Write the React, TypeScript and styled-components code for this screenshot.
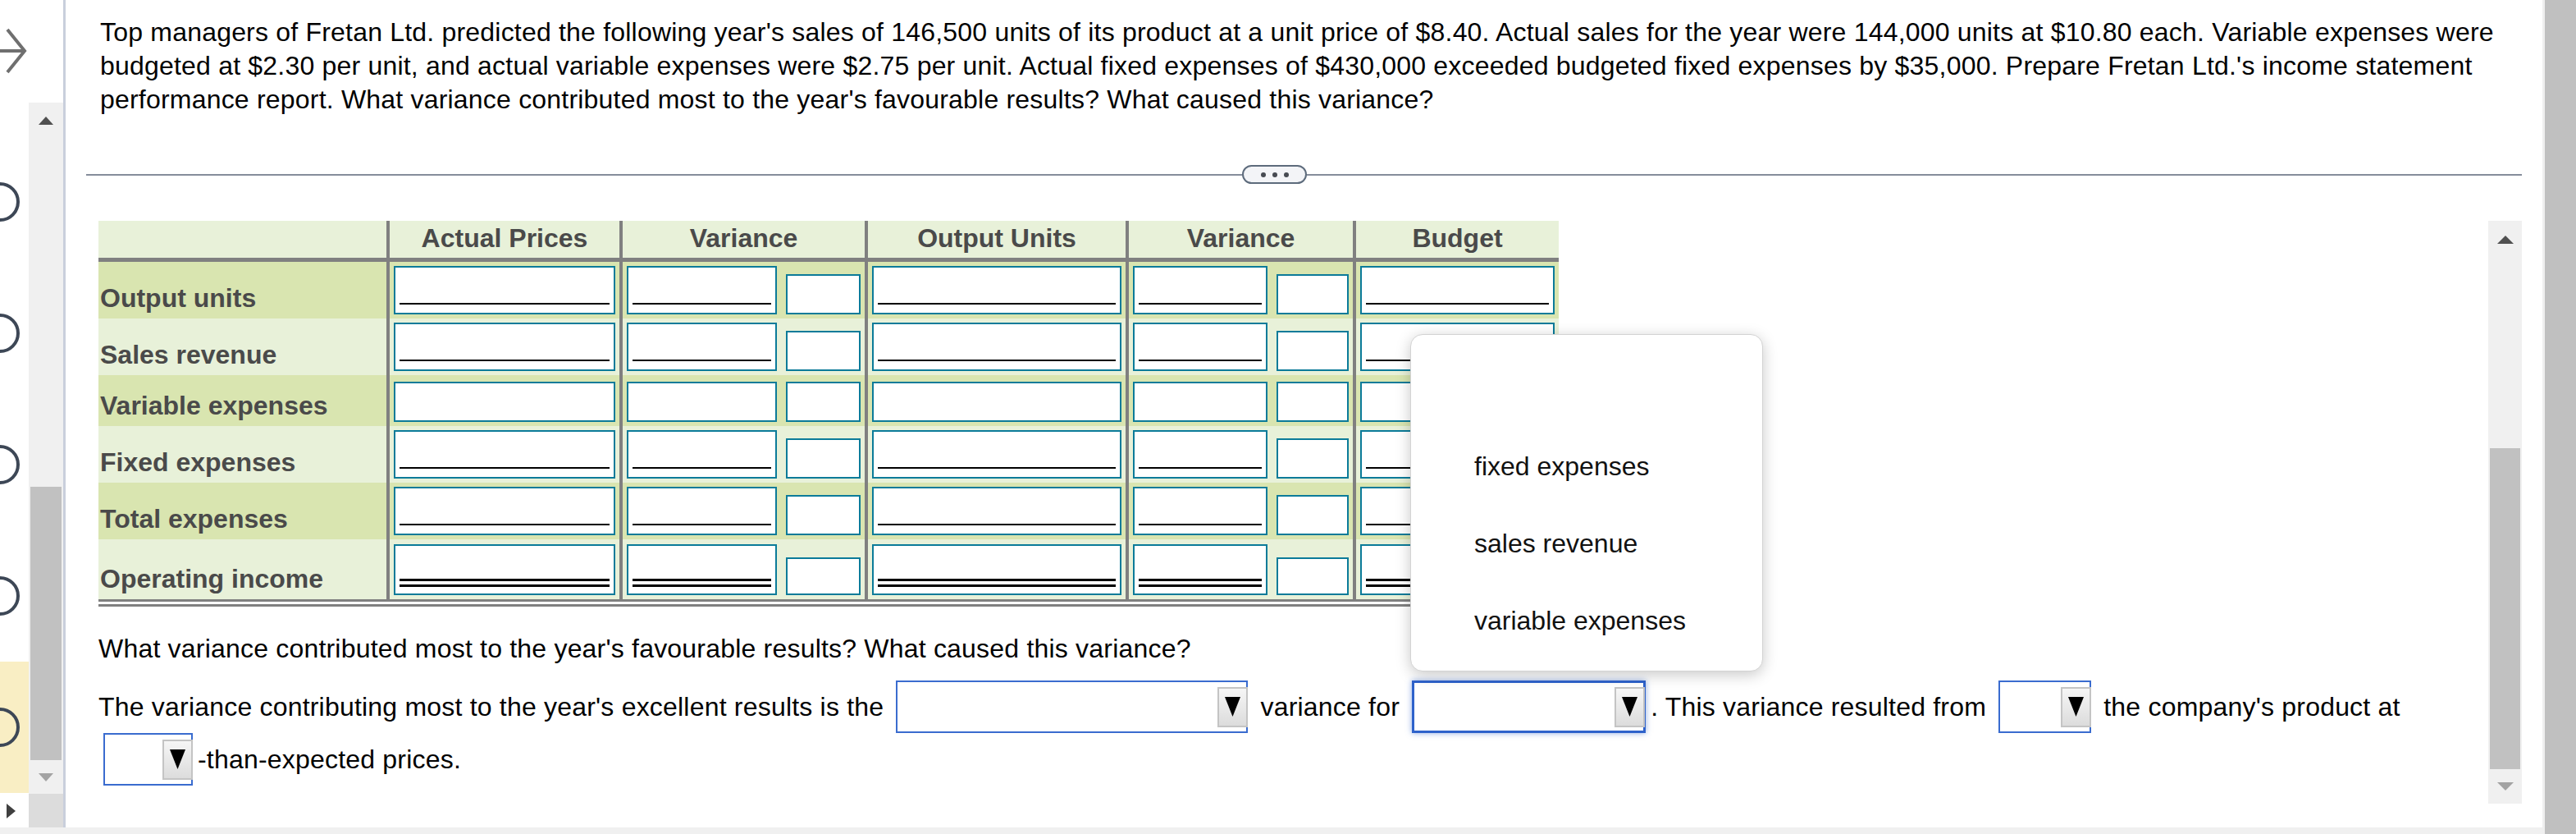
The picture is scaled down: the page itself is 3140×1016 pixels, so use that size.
import React from 'react';
import styled, { createGlobalStyle } from 'styled-components';

const GlobalStyle = createGlobalStyle`
  html, body {
    margin: 0;
    padding: 0;
    width: 3140px;
    height: 1016px;
    overflow: hidden;
    background: #fff;
    font-family: "Liberation Sans", Arial, Helvetica, sans-serif;
  }
  * {
    box-sizing: border-box;
  }
`;

const Page = styled.div`
  display: flex;
  width: 3140px;
  height: 1016px;
`;

const LeftColumn = styled.div`
  flex: 1;
  display: flex;
  flex-direction: column;
`;

const Body = styled.div`
  flex: 1;
  display: flex;
  min-height: 0;
`;

const BottomBar = styled.div`
  height: 8px;
  background: #f0f0f0;
`;

const RightStrip = styled.div`
  width: 41px;
  border-left: 3px solid #efefef;
  background: #c0c0c0;
`;

/* ---------- left sidebar ---------- */

const Sidebar = styled.aside`
  width: 80px;
  display: flex;
  flex-direction: column;
  border-right: 3px solid #c9cfdc;
`;

const SideTop = styled.div`
  height: 125px;
  padding-top: 32px;
`;

const SideMiddle = styled.div`
  flex: 1;
  display: flex;
  min-height: 0;
`;

const MarkerList = styled.div`
  width: 35px;
  padding-top: 41px;
  overflow: hidden;
`;

const Marker = styled.div<{ $active?: boolean }>`
  height: 160px;
  display: flex;
  align-items: center;
  background: ${(p) => (p.$active ? '#f9eec4' : 'transparent')};
`;

const ScrollTrack = styled.div<{ $w: number }>`
  width: ${(p) => p.$w}px;
  display: flex;
  flex-direction: column;
  background: #f0f0f0;
`;

const ScrollBtn = styled.div<{ $h: number }>`
  height: ${(p) => p.$h}px;
  display: flex;
  align-items: center;
  justify-content: center;
`;

const Thumb = styled.div<{ $h: number }>`
  margin: auto 2px 0;
  height: ${(p) => p.$h}px;
  background: #c1c1c1;
`;

const SideBottom = styled.div`
  height: 41px;
  display: flex;
`;

const SideBottomCell = styled.div<{ $gray?: boolean }>`
  width: ${(p) => (p.$gray ? '42px' : '35px')};
  background: ${(p) => (p.$gray ? '#dcdcdc' : '#fff')};
  display: flex;
  align-items: center;
  padding-left: 8px;
`;

/* ---------- main ---------- */

const Main = styled.main`
  flex: 1;
  display: flex;
  flex-direction: column;
  min-width: 0;
`;

const ProblemText = styled.p`
  margin: 0;
  padding: 19px 36px 0 42px;
  font-size: 32px;
  line-height: 41px;
  letter-spacing: 0.2px;
  color: #000;
`;

const Separator = styled.div`
  margin: 59px 25px 0 25px;
  height: 23px;
  display: flex;
  align-items: center;
`;

const SepLine = styled.div<{ $w?: number }>`
  height: 2px;
  background: #858d9b;
  ${(p) => (p.$w ? `width: ${p.$w}px;` : 'flex: 1;')}
`;

const Pill = styled.div`
  width: 79px;
  height: 23px;
  border: 2px solid #5d6b7c;
  border-radius: 12px;
  background: #f3f4f7;
  display: flex;
  align-items: center;
  justify-content: center;
  gap: 8px;
`;

const Dot = styled.span`
  width: 6px;
  height: 6px;
  border-radius: 50%;
  background: #474b52;
`;

const QuestionArea = styled.section`
  margin-top: 45px;
  display: flex;
  flex: 1;
  min-height: 0;
`;

const QuestionBody = styled.div`
  flex: 1;
  position: relative;
  padding-left: 40px;
`;

const InnerScroll = styled(ScrollTrack)`
  height: 710px;
  margin-right: 25px;
`;

/* ---------- table ---------- */

const columns = '351px 284px 299px 318px 277px 251px';

const Table = styled.div`
  width: 1780px;
  border-bottom: 9px double #808080;
`;

const HeaderRow = styled.div`
  display: grid;
  grid-template-columns: ${columns};
  height: 50px;
  background: #e8f1d9;
  border-bottom: 5px solid #808080;
`;

const HeaderCell = styled.div<{ $first?: boolean }>`
  border-left: ${(p) => (p.$first ? 'none' : '4px solid #808080')};
  text-align: center;
  font-weight: bold;
  font-size: 32px;
  line-height: 42px;
  color: #4a4a4a;
`;

const Row = styled.div<{ $h: number; $dark: boolean }>`
  display: grid;
  grid-template-columns: ${columns};
  height: ${(p) => p.$h}px;
  background: ${(p) => (p.$dark ? '#d9e5b0' : '#e8f1d9')};
`;

const LabelCell = styled.div`
  display: flex;
  align-items: flex-end;
  padding: 0 0 6px 2px;
  font-weight: bold;
  font-size: 32px;
  line-height: 37px;
  color: #4a4a4a;
`;

const DataCell = styled.div`
  border-left: 4px solid #808080;
  display: flex;
  align-items: flex-end;
  gap: 11px;
  padding: 0 5px 5px;
`;

const Input = styled.div<{ $h: number; $w?: number; $line: 'single' | 'double' | 'none' }>`
  height: ${(p) => p.$h}px;
  ${(p) => (p.$w ? `width: ${p.$w}px; flex: none;` : 'flex: 1;')}
  background: #fff;
  border: 2px solid #0b7b99;
  display: flex;
  align-items: flex-end;
  padding: 0 5px ${(p) => (p.$line === 'double' ? 8 : 10)}px;
`;

const Rule = styled.div<{ $double?: boolean }>`
  flex: 1;
  ${(p) =>
    p.$double
      ? 'height: 10px; border-top: 3px solid #000; border-bottom: 3px solid #000;'
      : 'height: 2px; background: #000;'}
`;

/* ---------- answer text ---------- */

const Prompt = styled.p`
  margin: 31px 0 0;
  font-size: 32px;
  line-height: 41px;
  letter-spacing: 0.2px;
  color: #000;
`;

const Answer = styled.p`
  margin: 18px 0 0;
  padding-right: 14px;
  font-size: 32px;
  line-height: 64px;
  letter-spacing: 0.2px;
  color: #000;
`;

const NoWrap = styled.span`
  white-space: nowrap;
`;

const Select = styled.span<{ $w: number; $focused?: boolean }>`
  display: inline-flex;
  vertical-align: top;
  justify-content: flex-end;
  align-items: center;
  width: ${(p) => p.$w}px;
  height: 64px;
  margin: 0 6px;
  background: #fff;
  border: ${(p) => (p.$focused ? '3px solid #2e62cb' : '2px solid #3a6ccf')};
  box-shadow: ${(p) => (p.$focused ? '0 0 7px rgba(46, 98, 203, 0.55)' : 'none')};
`;

const DropButton = styled.span`
  width: 37px;
  height: 49px;
  margin-right: -2px;
  display: flex;
  align-items: center;
  justify-content: center;
  background: linear-gradient(#f6f6f6, #dcdcdc);
  border: 2px solid #c4c4c4;
`;

const Popup = styled.div`
  position: absolute;
  left: 1639px;
  top: 138px;
  width: 430px;
  padding: 19px 0 14px;
  background: #fff;
  border: 1px solid #d3d3d3;
  border-radius: 15px;
  box-shadow: 0 4px 18px rgba(0, 0, 0, 0.22);
  z-index: 5;
`;

const Option = styled.div`
  height: 94px;
  padding-left: 77px;
  font-size: 32px;
  line-height: 94px;
  color: #111;
`;

/* ---------- pieces ---------- */

const ForwardArrow = () => (
  <svg width="34" height="60" viewBox="0 0 34 60">
    <path d="M0 30 H29 M9 4 L30 30 L9 56" fill="none" stroke="#6f6f6f" strokeWidth="4" strokeLinejoin="miter" />
  </svg>
);

const Ring = () => (
  <svg width="30" height="52" viewBox="0 0 30 52">
    <circle cx="0" cy="26" r="22" fill="none" stroke="#3d4756" strokeWidth="4" />
  </svg>
);

const Tri = ({ dir, color, w = 20, h = 11 }: { dir: 'up' | 'down' | 'right'; color: string; w?: number; h?: number }) => {
  const d =
    dir === 'up' ? `M0 ${h} L${w / 2} 0 L${w} ${h} Z` : dir === 'down' ? `M0 0 L${w} 0 L${w / 2} ${h} Z` : `M0 0 L${w} ${h / 2} L0 ${h} Z`;
  return (
    <svg width={w} height={h} viewBox={`0 0 ${w} ${h}`}>
      <path d={d} fill={color} />
    </svg>
  );
};

const Dropdown = ({ w, focused }: { w: number; focused?: boolean }) => (
  <Select $w={w} $focused={focused}>
    <DropButton>
      <Tri dir="down" color="#000" w={19} h={24} />
    </DropButton>
  </Select>
);

type LineKind = 'single' | 'double' | 'none';

const rows: { label: string; h: number; dark: boolean; line: LineKind; ih: number; sh: number }[] = [
  { label: 'Output units', h: 69, dark: true, line: 'single', ih: 59, sh: 49 },
  { label: 'Sales revenue', h: 69, dark: false, line: 'single', ih: 59, sh: 49 },
  { label: 'Variable expenses', h: 62, dark: true, line: 'none', ih: 49, sh: 49 },
  { label: 'Fixed expenses', h: 69, dark: false, line: 'single', ih: 59, sh: 49 },
  { label: 'Total expenses', h: 69, dark: true, line: 'single', ih: 59, sh: 49 },
  { label: 'Operating income', h: 73, dark: false, line: 'double', ih: 62, sh: 46 },
];

const headers = ['', 'Actual Prices', 'Variance', 'Output Units', 'Variance', 'Budget'];

const Field = ({ h, line, w }: { h: number; line: LineKind; w?: number }) => (
  <Input $h={h} $line={line} $w={w}>
    {line !== 'none' && <Rule $double={line === 'double'} />}
  </Input>
);

export default function App() {
  return (
    <Page>
      <GlobalStyle />
      <LeftColumn>
        <Body>
          <Sidebar>
            <SideTop>
              <ForwardArrow />
            </SideTop>
            <SideMiddle>
              <MarkerList>
                {[0, 1, 2, 3, 4].map((i) => (
                  <Marker key={i} $active={i === 4}>
                    <Ring />
                  </Marker>
                ))}
              </MarkerList>
              <ScrollTrack $w={42}>
                <ScrollBtn $h={44}>
                  <Tri dir="up" color="#505050" w={18} h={10} />
                </ScrollBtn>
                <Thumb $h={333} />
                <ScrollBtn $h={41}>
                  <Tri dir="down" color="#a3a3a3" w={18} h={10} />
                </ScrollBtn>
              </ScrollTrack>
            </SideMiddle>
            <SideBottom>
              <SideBottomCell>
                <Tri dir="right" color="#404040" w={11} h={18} />
              </SideBottomCell>
              <SideBottomCell $gray />
            </SideBottom>
          </Sidebar>

          <Main>
            <ProblemText>
              Top managers of Fretan Ltd. predicted the following year's sales of 146,500 units of its product at a unit price of
              $8.40. Actual sales for the year were 144,000 units at $10.80 each. Variable expenses were budgeted at $2.30 per unit,
              and actual variable expenses were $2.75 per unit. Actual fixed expenses of $430,000 exceeded budgeted fixed expenses by
              $35,000. Prepare Fretan Ltd.'s income statement performance report. What variance contributed most to the year's
              favourable results? What caused this variance?
            </ProblemText>

            <Separator>
              <SepLine $w={1409} />
              <Pill>
                <Dot />
                <Dot />
                <Dot />
              </Pill>
              <SepLine />
            </Separator>

            <QuestionArea>
              <QuestionBody>
                <Table>
                  <HeaderRow>
                    {headers.map((h, i) => (
                      <HeaderCell key={i} $first={i === 0}>
                        {h}
                      </HeaderCell>
                    ))}
                  </HeaderRow>
                  {rows.map((r) => (
                    <Row key={r.label} $h={r.h} $dark={r.dark}>
                      <LabelCell>{r.label}</LabelCell>
                      <DataCell>
                        <Field h={r.ih} line={r.line} />
                      </DataCell>
                      <DataCell>
                        <Field h={r.ih} line={r.line} w={183} />
                        <Field h={r.sh} line="none" w={91} />
                      </DataCell>
                      <DataCell>
                        <Field h={r.ih} line={r.line} />
                      </DataCell>
                      <DataCell>
                        <Field h={r.ih} line={r.line} w={164} />
                        <Field h={r.sh} line="none" w={88} />
                      </DataCell>
                      <DataCell>
                        <Field h={r.ih} line={r.line} />
                      </DataCell>
                    </Row>
                  ))}
                </Table>

                <Prompt>What variance contributed most to the year's favourable results? What caused this variance?</Prompt>

                <Answer>
                  The variance contributing most to the year's excellent results is the{' '}
                  <Dropdown w={429} /> variance for <Dropdown w={285} focused />. This variance resulted from{' '}
                  <Dropdown w={113} /> the company's product at{' '}
                  <NoWrap>
                    <Dropdown w={109} />
                    -than-expected prices.
                  </NoWrap>
                </Answer>

                <Popup>
                  <Option>&nbsp;</Option>
                  <Option>fixed expenses</Option>
                  <Option>sales revenue</Option>
                  <Option>variable expenses</Option>
                </Popup>
              </QuestionBody>

              <InnerScroll $w={41}>
                <ScrollBtn $h={46}>
                  <Tri dir="up" color="#505050" w={20} h={10} />
                </ScrollBtn>
                <Thumb $h={391} />
                <ScrollBtn $h={42}>
                  <Tri dir="down" color="#a3a3a3" w={20} h={10} />
                </ScrollBtn>
              </InnerScroll>
            </QuestionArea>
          </Main>
        </Body>
        <BottomBar />
      </LeftColumn>
      <RightStrip />
    </Page>
  );
}
